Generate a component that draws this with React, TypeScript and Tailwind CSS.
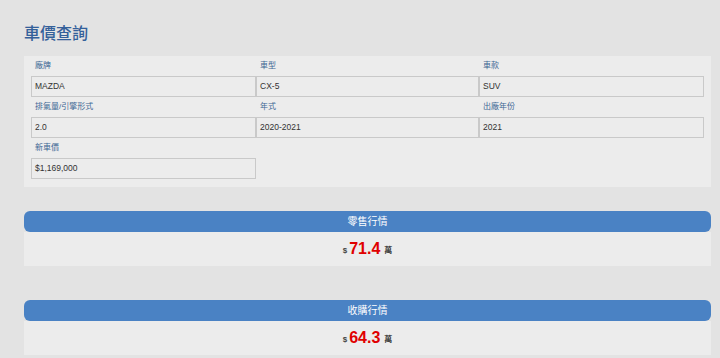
import React from 'react';

const font = { fontFamily: '"Liberation Sans", "Noto Sans CJK TC", sans-serif' };

interface FieldProps {
  label: string;
  value: string;
}

const Field: React.FC<FieldProps> = ({ label, value }) => (
  <div className="flex flex-col">
    <div className="h-[20px] flex items-center pl-[4px] text-[8px] text-[#3d6794]">{label}</div>
    <div className="h-[21px] flex items-center border border-[#c9c9c9] bg-[#ececec] pl-[3px] text-[8.5px] text-[#333]">
      {value}
    </div>
  </div>
);

interface PriceProps {
  title: string;
  price: string;
}

const PriceBlock: React.FC<PriceProps> = ({ title, price }) => (
  <div>
    <div className="h-[21px] flex items-center justify-center rounded-[6px] bg-[#4a82c4] text-[10px] text-white">
      {title}
    </div>
    <div className="h-[34px] flex items-center justify-center bg-[#ececec]">
      <span className="text-[8px] font-bold text-[#444] mt-[4px] mr-[2px]">$</span>
      <span className="text-[16px] font-bold text-[#e00000]">{price}</span>
      <span className="text-[8px] font-bold text-[#444] mt-[4px] ml-[4px]">萬</span>
    </div>
  </div>
);

export default function App() {
  return (
    <div className="w-[720px] h-[358px] bg-[#e3e3e3] overflow-hidden" style={font}>
      <div className="ml-[24px] w-[687px]">
        <h1 className="h-[56px] flex items-center pt-[12px] text-[16px] font-medium text-[#34609a]">車價查詢</h1>
        <div className="bg-[#ececec] px-[7px] pb-[8px]">
          <div className="grid grid-cols-[225px_223px_225px]">
            <Field label="廠牌" value="MAZDA" />
            <Field label="車型" value="CX-5" />
            <Field label="車款" value="SUV" />
            <Field label="排氣量/引擎形式" value="2.0" />
            <Field label="年式" value="2020-2021" />
            <Field label="出廠年份" value="2021" />
            <Field label="新車價" value="$1,169,000" />
          </div>
        </div>
        <div className="mt-[24px] flex flex-col gap-[34px]">
          <PriceBlock title="零售行情" price="71.4" />
          <PriceBlock title="收購行情" price="64.3" />
        </div>
      </div>
    </div>
  );
}
